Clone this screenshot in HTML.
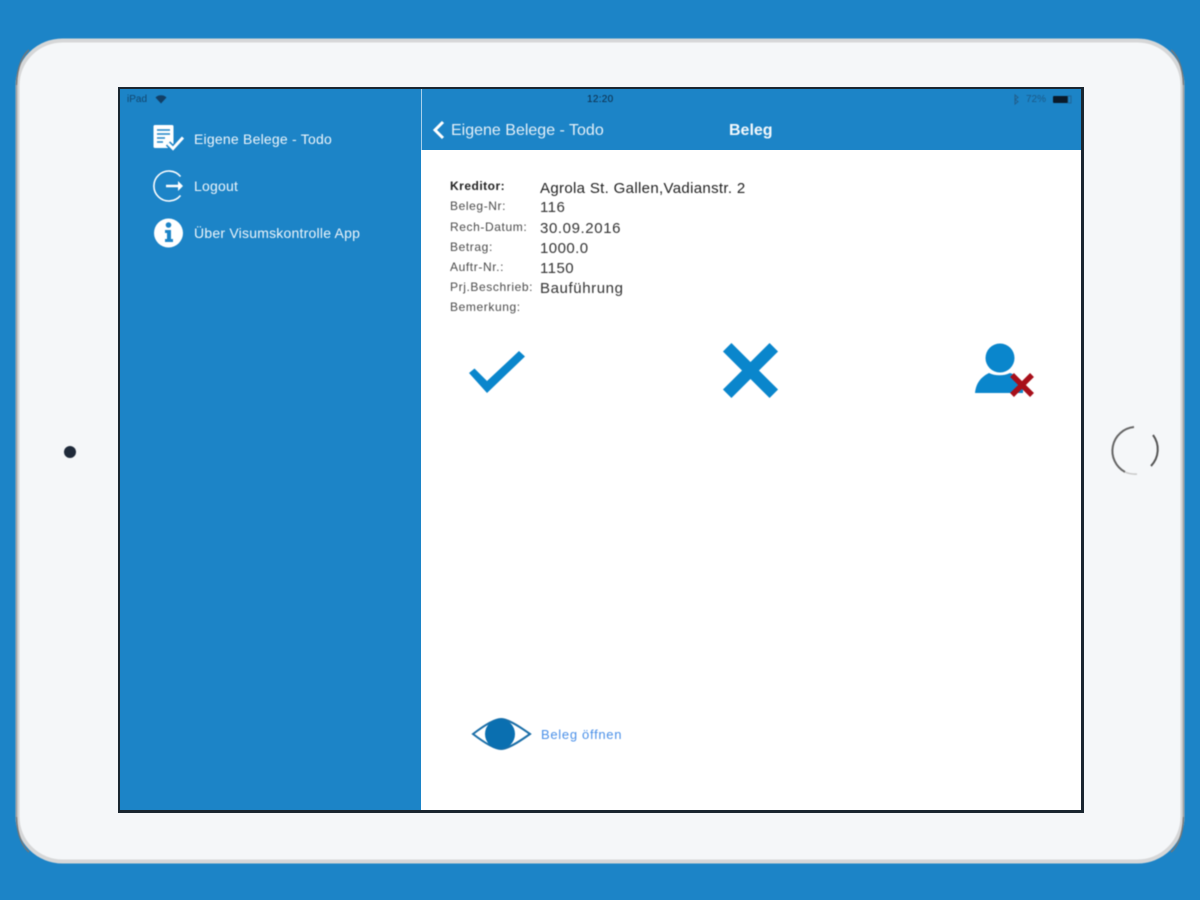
<!DOCTYPE html>
<html><head><meta charset="utf-8"><style>
html,body{margin:0;padding:0}
body{width:1200px;height:900px;position:relative;overflow:hidden;background:#1c84c7;font-family:"Liberation Sans",sans-serif}
.t{position:absolute;white-space:nowrap;line-height:1;filter:blur(.55px)}
.abs{position:absolute}
.l{font-size:12px;letter-spacing:.6px;color:#4a4a4a;left:450px}
.v{font-size:15px;letter-spacing:.45px;color:#333;left:540px}
.s{font-size:14px;letter-spacing:.22px;color:#eef6fb;left:194px}
</style></head><body>
<svg class="abs" width="1200" height="900" style="left:0;top:0;filter:blur(.6px)">
 <defs>
  <linearGradient id="top" x1="0" x2="1" y1="0" y2="0">
   <stop offset="0" stop-color="#555"/><stop offset=".14" stop-color="#c4c5c6"/><stop offset=".86" stop-color="#c4c5c6"/><stop offset="1" stop-color="#555"/>
  </linearGradient>
 </defs>
 <rect x="17.500" y="40.500" width="1165" height="821" rx="45" fill="#f5f7f9" stroke="#d6d7d8" stroke-width="4"/>
 <path d="M60 40H1140" fill="none" stroke="url(#top)" stroke-width="2.500"/>
 <path d="M60 861.500H1140" fill="none" stroke="url(#top)" stroke-width="2.500"/>
 <path d="M16.500 85V817M1183.500 85V817" fill="none" stroke="#9a9b9c" stroke-width="1.500"/>
 <path d="M16.500 85C17 65 24 54 29 50" fill="none" stroke="#777" stroke-width="1.500"/>
 <path d="M1183.500 85C1183 65 1176 54 1171 50" fill="none" stroke="#777" stroke-width="1.500"/>
 <path d="M16.500 817C17 837 24 848 29 852" fill="none" stroke="#777" stroke-width="1.500"/>
 <path d="M1183.500 817C1183 837 1176 848 1171 852" fill="none" stroke="#777" stroke-width="1.500"/>
</svg>
<div class="abs" style="left:118px;top:87px;width:966px;height:726px;background:#1a2630"></div>
<div class="abs" style="left:120px;top:89px;width:301px;height:721px;background:#1c84c7"></div>
<div class="abs" style="left:421px;top:89px;width:660px;height:721px;background:#fff"></div>
<div class="abs" style="left:422px;top:89px;width:659px;height:61px;background:#1c84c7"></div>
<div class="abs" style="left:421px;top:89px;width:1px;height:61px;background:#a9d0ea"></div>

<svg class="abs" width="1200" height="900" style="left:0;top:0;filter:blur(.45px)">
 <rect x="153.500" y="125" width="20" height="23" rx="1.500" fill="#fff"/>
 <path d="M157 130h13M157 134h13M157 138h8M157 142h6" stroke="#1c84c7" stroke-width="1.400"/>
 <path d="M168 143.500l5 5 10-11" fill="none" stroke="#1c84c7" stroke-width="6"/>
 <path d="M168 143.500l5 5 10-11" fill="none" stroke="#fff" stroke-width="3"/>
 <path d="M180.500 176.500A15 15 0 1 0 180.500 195.500" fill="none" stroke="#fff" stroke-width="1.600"/>
 <path d="M166 186h13" stroke="#fff" stroke-width="2.500"/><path d="M178 181l5 5-5 5z" fill="#fff"/>
 <circle cx="168.500" cy="233" r="14.500" fill="#fff"/>
 <circle cx="168.500" cy="225" r="2.800" fill="#1c84c7"/>
 <path d="M165 230h6v9h2v3h-8v-3h2v-6h-2z" fill="#1c84c7"/>
 <path d="M155.500 97.500a8 8 0 0 1 11 0l-5.500 6z" fill="#123f66"/>
 <path d="M1015 95v9l3-2.500-3-2 3-2z" fill="none" stroke="#225f8c" stroke-width="1"/>
 <rect x="1053" y="96" width="15" height="7" rx="1" fill="#0a1a2a"/><rect x="1068" y="96" width="3" height="7" fill="none" stroke="#225f8c" stroke-width=".8"/>
 <path d="M443 122l-8 8 8 8" fill="none" stroke="#fff" stroke-width="3"/>
 <polygon points="469,373 474.500,368.500 487,381 519,351 525,356.500 487,393" fill="#0a86cc"/>
 <path d="M727.200 347.200l46.600 46.600M773.800 347.200l-46.600 46.600" stroke="#0a86cc" stroke-width="12"/>
 <circle cx="1000" cy="358" r="14.500" fill="#0a86cc"/>
 <path d="M975 393c1-10 6-16 14-20 6 3 15 3 21 0 6 2 11 6 13 12v8z" fill="#0a86cc"/>
 <path d="M1012 375l20 20M1032 375l-20 20" stroke="#a80f1a" stroke-width="5.500"/>
 <path d="M473 734c13-10 22-15 28-15s15 5 29 15c-14 10-23 15-29 15s-15-5-28-15z" fill="#fff" stroke="#1c6fa8" stroke-width="2"/>
 <circle cx="500" cy="734" r="15" fill="#0a6fb0"/>
 <path d="M1134 427a24 24 0 0 0-9 45" fill="none" stroke="#666" stroke-width="2"/>
 <path d="M1153 435a24 24 0 0 1-2 31" fill="none" stroke="#555" stroke-width="2"/>
 <path d="M1125 472a24 24 0 0 0 12 2" fill="none" stroke="#c8c8c8" stroke-width="1.500"/>
</svg>
<div class="abs" style="left:64px;top:446px;width:12px;height:12px;border-radius:50%;background:#1f2a3a;filter:blur(.6px)"></div>

<div class="t" style="left:127px;top:95px;font-size:10px;color:#12466e">iPad</div>
<div class="t" style="left:587px;top:95px;font-size:10px;letter-spacing:.3px;color:#0d2a44">12:20</div>
<div class="t" style="left:1026px;top:95px;font-size:10px;color:#1b5a88">72%</div>
<div class="t s" style="top:132px">Eigene Belege - Todo</div>
<div class="t s" style="top:179px">Logout</div>
<div class="t s" style="top:226px">Über Visumskontrolle App</div>
<div class="t" style="left:451px;top:123px;font-size:16px;color:#e4f0f8">Eigene Belege - Todo</div>
<div class="t" style="left:729px;top:123px;font-size:16px;font-weight:bold;color:#f4f9fc">Beleg</div>

<div class="t" style="left:450px;top:180px;font-size:12px;font-weight:bold;letter-spacing:.5px;color:#222">Kreditor:</div>
<div class="t l" style="top:200px">Beleg-Nr:</div>
<div class="t l" style="top:221px">Rech-Datum:</div>
<div class="t l" style="top:241px">Betrag:</div>
<div class="t l" style="top:261px">Auftr-Nr.:</div>
<div class="t l" style="top:281px">Prj.Beschrieb:</div>
<div class="t l" style="top:301px">Bemerkung:</div>
<div class="t v" style="top:181px;letter-spacing:.33px;color:#222">Agrola St. Gallen,Vadianstr. 2</div>
<div class="t v" style="top:200px">116</div>
<div class="t v" style="top:221px;letter-spacing:.6px">30.09.2016</div>
<div class="t v" style="top:241px">1000.0</div>
<div class="t v" style="top:261px">1150</div>
<div class="t v" style="top:281px;letter-spacing:.6px">Bauführung</div>
<div class="t" style="left:541px;top:728px;font-size:13px;letter-spacing:.7px;color:#4a90e8">Beleg öffnen</div>
</body></html>
